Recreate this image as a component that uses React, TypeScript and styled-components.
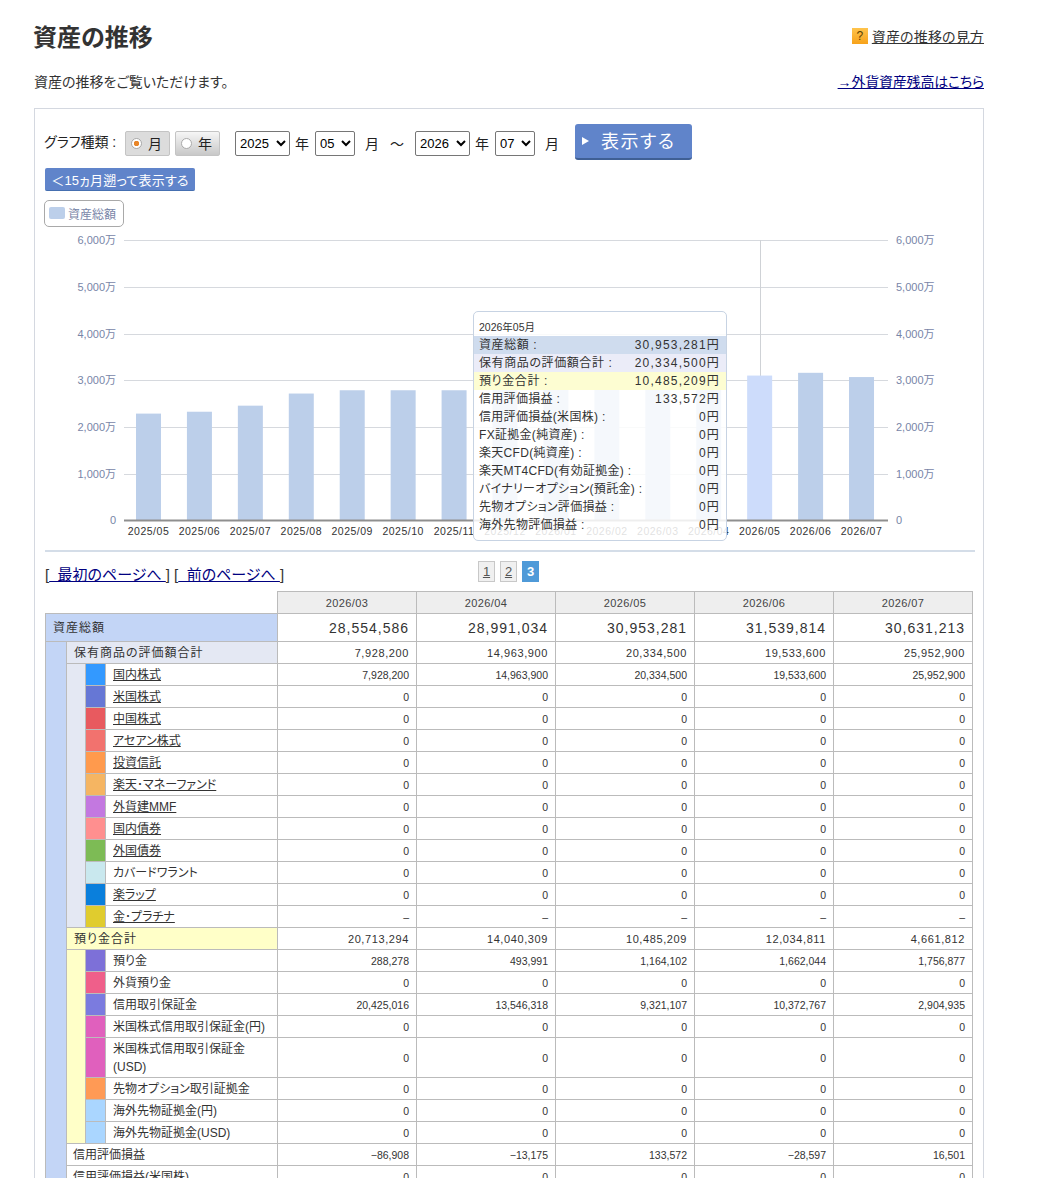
import styled, { createGlobalStyle } from "styled-components";

const GlobalStyle = createGlobalStyle`
  html, body {
    margin: 0;
    padding: 0;
    background: #fff;
    overflow: hidden;
  }
  body {
    font-family: "Liberation Sans", "Noto Sans CJK JP", sans-serif;
    font-size: 12px;
    font-feature-settings: "palt";
    color: #333;
  }
`;

type Tone = "blue" | "grey" | "yellow" | "plain";

const toneColor: Record<Tone, string> = {
  blue: "#c3d5f6",
  grey: "#e4e8f3",
  yellow: "#ffffc8",
  plain: "#fff",
};

const months = ["2026/03", "2026/04", "2026/05", "2026/06", "2026/07"];
const zeros = ["0", "0", "0", "0", "0"];

const holdings = [
  { label: "国内株式", color: "#3399ff", link: true, values: ["7,928,200", "14,963,900", "20,334,500", "19,533,600", "25,952,900"] },
  { label: "米国株式", color: "#6677d5", link: true, values: zeros },
  { label: "中国株式", color: "#e85a5f", link: true, values: zeros },
  { label: "アセアン株式", color: "#f2726e", link: true, values: zeros },
  { label: "投資信託", color: "#ff9a4d", link: true, values: zeros },
  { label: "楽天･マネーファンド", color: "#f5b562", link: true, values: zeros },
  { label: "外貨建MMF", color: "#c378e0", link: true, values: zeros },
  { label: "国内債券", color: "#ff8f8f", link: true, values: zeros },
  { label: "外国債券", color: "#7dbb55", link: true, values: zeros },
  { label: "カバードワラント", color: "#c9e8ee", link: false, values: zeros },
  { label: "楽ラップ", color: "#0a7fdc", link: true, values: zeros },
  { label: "金･プラチナ", color: "#e0cc2e", link: true, values: ["–", "–", "–", "–", "–"] },
];

const deposits = [
  { label: "預り金", color: "#7d70d8", link: false, values: ["288,278", "493,991", "1,164,102", "1,662,044", "1,756,877"] },
  { label: "外貨預り金", color: "#ef5f8a", link: false, values: zeros },
  { label: "信用取引保証金", color: "#7b7bdf", link: false, values: ["20,425,016", "13,546,318", "9,321,107", "10,372,767", "2,904,935"] },
  { label: "米国株式信用取引保証金(円)", color: "#e060bd", link: false, values: zeros },
  { label: "米国株式信用取引保証金(USD)", color: "#e060bd", link: false, values: zeros },
  { label: "先物オプション取引証拠金", color: "#ff9a55", link: false, values: zeros },
  { label: "海外先物証拠金(円)", color: "#aad6ff", link: false, values: zeros },
  { label: "海外先物証拠金(USD)", color: "#aad6ff", link: false, values: zeros },
];

const tooltipRows: { label: string; value: string; tone?: string }[] = [
  { label: "資産総額", value: "30,953,281円", tone: "#cfdcee" },
  { label: "保有商品の評価額合計", value: "20,334,500円", tone: "#ebecf8" },
  { label: "預り金合計", value: "10,485,209円", tone: "#fdfdd2" },
  { label: "信用評価損益", value: "133,572円" },
  { label: "信用評価損益(米国株)", value: "0円" },
  { label: "FX証拠金(純資産)", value: "0円" },
  { label: "楽天CFD(純資産)", value: "0円" },
  { label: "楽天MT4CFD(有効証拠金)", value: "0円" },
  { label: "バイナリーオプション(預託金)", value: "0円" },
  { label: "先物オプション評価損益", value: "0円" },
  { label: "海外先物評価損益", value: "0円" },
];

const bars = [
  { month: "2025/05", value: 2280 },
  { month: "2025/06", value: 2320 },
  { month: "2025/07", value: 2450 },
  { month: "2025/08", value: 2710 },
  { month: "2025/09", value: 2780 },
  { month: "2025/10", value: 2780 },
  { month: "2025/11", value: 2780 },
  { month: "2025/12", value: 2800 },
  { month: "2026/01", value: 2850 },
  { month: "2026/02", value: 2830 },
  { month: "2026/03", value: 2855 },
  { month: "2026/04", value: 2899 },
  { month: "2026/05", value: 3095 },
  { month: "2026/06", value: 3154 },
  { month: "2026/07", value: 3063 },
];

const ticks = [
  { label: "6,000万", y: 240.5 },
  { label: "5,000万", y: 287.5 },
  { label: "4,000万", y: 334.5 },
  { label: "3,000万", y: 380.5 },
  { label: "2,000万", y: 427.5 },
  { label: "1,000万", y: 474.5 },
  { label: "0", y: 520.5 },
];

const Chart = () => (
  <ChartSvg viewBox="45 228 930 317">
    {ticks.slice(0, 6).map((t) => (
      <line key={t.y} x1={124} x2={888} y1={t.y} y2={t.y} stroke="#d6d9de" />
    ))}
    {ticks.map((t) => (
      <g key={t.label} fill="#7885a8" fontSize={11}>
        <text x={116} y={t.y + 3} textAnchor="end">{t.label}</text>
        <text x={896} y={t.y + 3}>{t.label}</text>
      </g>
    ))}
    <line x1={760.5} x2={760.5} y1={240} y2={520} stroke="#cfd2d6" />
    {bars.map((b, i) => {
      const center = 148.5 + i * 50.93;
      const h = (b.value / 6000) * 280;
      return (
        <g key={b.month}>
          <rect x={center - 12.5} y={520 - h} width={25} height={h} fill={i === 12 ? "#cddcfb" : "#bccfea"} />
          <text x={center} y={535} textAnchor="middle" fontSize={10.5} letterSpacing={0.5} fill="#333">{b.month}</text>
        </g>
      );
    })}
    <line x1={124} x2={888} y1={520.5} y2={520.5} stroke="#8f8f8f" strokeWidth={2} />
  </ChartSvg>
);

const ValueCells = ({ values, size }: { values: string[]; size: "large" | "mid" | "small" }) => (
  <>
    {values.map((v, i) => (
      <Value key={i} $size={size}>{v}</Value>
    ))}
  </>
);

export default function App() {
  return (
    <Page>
      <GlobalStyle />
      <TitleRow>
        <Title>資産の推移</Title>
        <HelpLink>
          <HelpIcon>?</HelpIcon>
          <DarkLink href="#">資産の推移の見方</DarkLink>
        </HelpLink>
      </TitleRow>
      <IntroRow>
        <Intro>資産の推移をご覧いただけます。</Intro>
        <BlueLink href="#">→外貨資産残高はこちら</BlueLink>
      </IntroRow>

      <Panel>
        <FormRow>
          <FormLabel>グラフ種類 :</FormLabel>
          <RadioButton $active>
            <RadioDot $active />月
          </RadioButton>
          <RadioButton>
            <RadioDot />年
          </RadioButton>
          <Select $width={55} $left={10} defaultValue="2025">
            <option>2025</option>
          </Select>
          <Unit $left={5}>年</Unit>
          <Select $width={40} $left={6} defaultValue="05">
            <option>05</option>
          </Select>
          <Unit $left={10}>月</Unit>
          <Unit $left={11}>～</Unit>
          <Select $width={55} $left={11} defaultValue="2026">
            <option>2026</option>
          </Select>
          <Unit $left={5}>年</Unit>
          <Select $width={40} $left={6} defaultValue="07">
            <option>07</option>
          </Select>
          <Unit $left={10}>月</Unit>
          <ShowButton>
            <ShowArrow />
            表示する
          </ShowButton>
        </FormRow>
        <BackButton>＜15ヵ月遡って表示する</BackButton>
        <Legend>
          <LegendSwatch />
          資産総額
        </Legend>

        <ChartWrap>
          <Chart />
          <Tooltip>
            <TooltipDate>2026年05月</TooltipDate>
            {tooltipRows.map((row) => (
              <TooltipRow key={row.label} $bg={row.tone}>
                <span>{row.label} :</span>
                <TooltipValue>{row.value}</TooltipValue>
              </TooltipRow>
            ))}
          </Tooltip>
        </ChartWrap>

        <Divider />

        <PagerRow>
          <PagerLinks>
            [<PagerLink href="#">&nbsp;&nbsp;最初のページへ&nbsp;</PagerLink>] [<PagerLink href="#">&nbsp;&nbsp;前のページへ&nbsp;</PagerLink>]
          </PagerLinks>
          <PageNumbers>
            <PageNumber>1</PageNumber>
            <PageNumber>2</PageNumber>
            <PageNumber $current>3</PageNumber>
          </PageNumbers>
        </PagerRow>

        <AssetTable>
          <colgroup>
            <col width={21} />
            <col width={19} />
            <col width={20} />
            <col width={172} />
            {months.map((m) => (
              <col key={m} width={139} />
            ))}
          </colgroup>
          <thead>
            <tr>
              <BlankHead colSpan={4} />
              {months.map((m) => (
                <MonthHead key={m}>{m}</MonthHead>
              ))}
            </tr>
          </thead>
          <tbody>
            <TotalRow>
              <GroupLabel colSpan={4} $tone="blue" $spaced>資産総額</GroupLabel>
              <ValueCells size="large" values={["28,554,586", "28,991,034", "30,953,281", "31,539,814", "30,631,213"]} />
            </TotalRow>

            <Row>
              <Rail rowSpan={24} $tone="blue" />
              <GroupLabel colSpan={3} $tone="grey" $spaced>保有商品の評価額合計</GroupLabel>
              <ValueCells size="mid" values={["7,928,200", "14,963,900", "20,334,500", "19,533,600", "25,952,900"]} />
            </Row>
            {holdings.map((row, i) => (
              <Row key={row.label}>
                {i === 0 && <Rail rowSpan={holdings.length} $tone="grey" />}
                <Swatch $color={row.color} />
                <ItemLabel>{row.link ? <DarkLink href="#">{row.label}</DarkLink> : row.label}</ItemLabel>
                <ValueCells size="small" values={row.values} />
              </Row>
            ))}

            <Row>
              <GroupLabel colSpan={3} $tone="yellow" $spaced>預り金合計</GroupLabel>
              <ValueCells size="mid" values={["20,713,294", "14,040,309", "10,485,209", "12,034,811", "4,661,812"]} />
            </Row>
            {deposits.map((row, i) => (
              <Row key={row.label}>
                {i === 0 && <Rail rowSpan={deposits.length} $tone="yellow" />}
                <Swatch $color={row.color} />
                <ItemLabel>{row.label}</ItemLabel>
                <ValueCells size="small" values={row.values} />
              </Row>
            ))}

            <Row>
              <GroupLabel colSpan={3} $tone="plain">信用評価損益</GroupLabel>
              <ValueCells size="small" values={["−86,908", "−13,175", "133,572", "−28,597", "16,501"]} />
            </Row>
            <Row>
              <GroupLabel colSpan={3} $tone="plain">信用評価損益(米国株)</GroupLabel>
              <ValueCells size="small" values={zeros} />
            </Row>
          </tbody>
        </AssetTable>
      </Panel>
    </Page>
  );
}

const Page = styled.div`
  width: 950px;
  height: 1178px;
  padding-left: 34px;
  overflow: hidden;
  box-sizing: content-box;
`;

const TitleRow = styled.div`
  display: flex;
  justify-content: space-between;
  align-items: center;
  padding-top: 21px;
  height: 33px;
`;

const Title = styled.h1`
  margin: 0 0 0 -1px;
  font-size: 24px;
  line-height: 33px;
  font-weight: bold;
  color: #333;
`;

const HelpLink = styled.div`
  display: flex;
  align-items: center;
  gap: 4px;
  margin-bottom: 3px;
  font-size: 14px;
  letter-spacing: 0.15px;
`;

const HelpIcon = styled.span`
  width: 16px;
  height: 16px;
  background: linear-gradient(#ffc44d, #f7a21b);
  color: #5a4000;
  font-size: 12px;
  line-height: 16px;
  text-align: center;
`;

const DarkLink = styled.a`
  color: #333;
  text-decoration: underline;
`;

const IntroRow = styled.div`
  display: flex;
  justify-content: space-between;
  align-items: center;
  margin-top: 17px;
  height: 20px;
  font-size: 14px;
`;

const Intro = styled.p`
  margin: 0;
  color: #333;
`;

const BlueLink = styled.a`
  color: #000080;
  text-decoration: underline;
  letter-spacing: -0.2px;
`;

const Panel = styled.section`
  margin-top: 17px;
  border: 1px solid #d4d8e0;
  border-bottom: 0;
  padding: 15px 10px 0;
  height: 1100px;
`;

const FormRow = styled.div`
  display: flex;
  align-items: center;
  height: 36px;
  font-size: 14px;
  color: #222;
`;

const FormLabel = styled.span`
  width: 80px;
  flex: none;
  margin: 0 0 2px -1px;
  padding-right: 1px;
`;

const RadioButton = styled.div<{ $active?: boolean }>`
  width: 45px;
  height: 25px;
  margin-right: 5px;
  margin-top: 3px;
  box-sizing: border-box;
  border: 1px solid #c4c4c4;
  border-radius: 2px;
  display: flex;
  align-items: center;
  gap: 6px;
  padding: 0 0 2px 5px;
  background: ${(p) => (p.$active ? "#dcdcdc" : "linear-gradient(#f6f6f6, #c8c8c8)")};
`;

const RadioDot = styled.span<{ $active?: boolean }>`
  width: 9px;
  height: 9px;
  margin-top: 2px;
  border-radius: 50%;
  border: 1px solid #aaa;
  background: ${(p) => (p.$active ? "radial-gradient(circle, #e8862a 0 2.5px, #fff 3px)" : "#fff")};
`;

const Select = styled.select<{ $width: number; $left: number }>`
  width: ${(p) => p.$width}px;
  height: 25px;
  margin-left: ${(p) => p.$left}px;
  margin-top: 3px;
  font-family: "Liberation Sans", sans-serif;
  font-size: 13px;
  color: #000;
  background: #fff;
  border: 1px solid #767676;
  border-radius: 2px;
  padding: 0;
`;

const Unit = styled.span<{ $left: number }>`
  margin-left: ${(p) => p.$left}px;
  margin-top: 1px;
`;

const ShowButton = styled.button`
  width: 117px;
  height: 36px;
  margin-left: 16px;
  border: 0;
  border-bottom: 2px solid #3f5f94;
  border-radius: 3px;
  background: #6084ca;
  color: #fff;
  font-family: inherit;
  font-feature-settings: inherit;
  font-size: 18px;
  letter-spacing: 1.5px;
  display: flex;
  align-items: center;
  padding: 0 0 3px 7px;
`;

const ShowArrow = styled.span`
  width: 0;
  height: 0;
  margin: 3px 12px 0 0;
  border-left: 7px solid #fff;
  border-top: 4px solid transparent;
  border-bottom: 4px solid transparent;
`;

const BackButton = styled.button`
  display: block;
  width: 150px;
  height: 23px;
  margin-top: 8px;
  padding: 0;
  border: 0;
  border-bottom: 1px solid #456fb0;
  border-radius: 2px;
  background: #6084ca;
  color: #fff;
  font-family: inherit;
  font-feature-settings: inherit;
  font-size: 13px;
  letter-spacing: 0.2px;
`;

const Legend = styled.div`
  width: 80px;
  height: 27px;
  margin-top: 9px;
  margin-left: -1px;
  box-sizing: border-box;
  border: 1px solid #a9a9a9;
  border-radius: 5px;
  display: flex;
  align-items: center;
  gap: 3px;
  padding: 0 0 1px 4px;
  font-size: 12px;
  color: #7885a8;
`;

const LegendSwatch = styled.span`
  width: 16px;
  height: 12px;
  border-radius: 2px;
  background: #bccfea;
`;

const ChartWrap = styled.div`
  position: relative;
  width: 930px;
  height: 317px;
  margin-top: 1px;
`;

const ChartSvg = styled.svg`
  display: block;
  width: 930px;
  height: 317px;
  font-family: "Liberation Sans", "Noto Sans CJK JP", sans-serif;
`;

const Tooltip = styled.div`
  position: absolute;
  left: 428px;
  top: 83px;
  width: 254px;
  height: 230px;
  box-sizing: border-box;
  border: 1px solid #c7d3e3;
  border-radius: 5px;
  background: rgba(255, 255, 255, 0.85);
  font-size: 12px;
  color: #333;
`;

const TooltipDate = styled.div`
  height: 24px;
  line-height: 30px;
  padding-left: 5px;
  font-size: 10.5px;
`;

const TooltipRow = styled.div<{ $bg?: string }>`
  display: flex;
  justify-content: space-between;
  height: 18px;
  line-height: 18px;
  padding: 0 6px 0 5px;
  letter-spacing: ${(p) => (p.$bg ? "0.6px" : "0.3px")};
  background: ${(p) => p.$bg ?? "transparent"};
`;

const TooltipValue = styled.span`
  letter-spacing: 1.2px;
`;

const Divider = styled.hr`
  width: 930px;
  height: 2px;
  margin: 5px 0 0;
  border: 0;
  background: #d4dde8;
`;

const PagerRow = styled.div`
  position: relative;
  height: 39px;
`;

const PagerLinks = styled.div`
  padding-top: 11px;
  font-size: 15px;
  color: #333;
`;

const PagerLink = styled.a`
  color: #000080;
  text-decoration: underline;
`;

const PageNumbers = styled.div`
  position: absolute;
  left: 433px;
  top: 9px;
  display: flex;
  gap: 5px;
`;

const PageNumber = styled.span<{ $current?: boolean }>`
  width: 17px;
  height: 21px;
  box-sizing: border-box;
  border: 1px solid ${(p) => (p.$current ? "#4f9ad8" : "#c8c8c8")};
  background: ${(p) => (p.$current ? "#4f9ad8" : "#f0f0f0")};
  color: ${(p) => (p.$current ? "#fff" : "#555")};
  font-weight: ${(p) => (p.$current ? "bold" : "normal")};
  text-decoration: ${(p) => (p.$current ? "none" : "underline")};
  text-align: center;
  line-height: 19px;
  font-size: 13px;
`;

const AssetTable = styled.table`
  width: 928px;
  table-layout: fixed;
  border-collapse: collapse;
  font-size: 12px;
  color: #333;

  td, th {
    padding: 0;
    border: 1px solid #bbb;
  }
`;

const BlankHead = styled.th`
  && {
    border: 0;
    border-bottom: 1px solid #bbb;
  }
`;

const MonthHead = styled.th`
  height: 21px;
  background: #eee;
  font-weight: normal;
  font-size: 11px;
  letter-spacing: 0.4px;
  color: #444;
`;

const TotalRow = styled.tr`
  height: 28px;
`;

const Row = styled.tr`
  height: 22px;
`;

const GroupLabel = styled.td<{ $tone: Tone; $spaced?: boolean }>`
  background: ${(p) => toneColor[p.$tone]};
  padding-left: ${(p) => (p.$tone === "plain" ? "6px" : "7px")} !important;
  letter-spacing: ${(p) => (p.$spaced ? "1px" : "0")};
  line-height: 18px;
`;

const Rail = styled.td<{ $tone: Tone }>`
  background: ${(p) => toneColor[p.$tone]};
`;

const Swatch = styled.td<{ $color: string }>`
  background: ${(p) => p.$color};
`;

const ItemLabel = styled.td`
  padding: 1.5px 4px 1.5px 7px !important;
  line-height: 18px;
`;

const Value = styled.td<{ $size: "large" | "mid" | "small" }>`
  text-align: right;
  padding-right: 7px !important;
  line-height: 18px;
  font-size: ${(p) => (p.$size === "large" ? "14px" : p.$size === "mid" ? "11px" : "10.5px")};
  letter-spacing: ${(p) => (p.$size === "large" ? "1px" : p.$size === "mid" ? "0.6px" : "0")};
`;
